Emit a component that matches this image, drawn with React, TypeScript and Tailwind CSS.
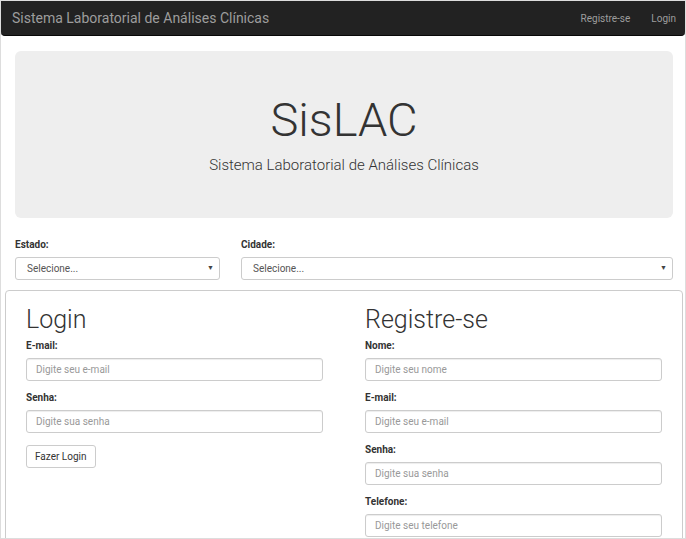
import React from "react";

const font = { fontFamily: "Roboto, 'Noto Sans', sans-serif" };

function Field({ label, placeholder, last }: { label: string; placeholder: string; last?: boolean }) {
  return (
    <div className={last ? "" : "mb-[10px]"}>
      <div className="text-[10px] font-bold text-[#333] leading-[14px] mb-[5px]">{label}</div>
      <div className="h-[23px] border border-[#ccc] rounded-[3px] bg-white px-[9px] flex items-center text-[10px] text-[#999] shadow-[inset_0_1px_1px_rgba(0,0,0,0.075)]">
        {placeholder}
      </div>
    </div>
  );
}

function Select({ label, className }: { label: string; className?: string }) {
  return (
    <div className={className}>
      <div className="text-[10px] font-bold text-[#333] leading-[14px] mb-[5px]">{label}</div>
      <div className="h-[23px] border border-[#ccc] rounded-[3px] bg-white pl-[11px] pr-[5px] flex items-center justify-between text-[10px] text-[#555]">
        <span>Selecione...</span>
        <span className="text-[7px] text-[#444]">▼</span>
      </div>
    </div>
  );
}

export default function App() {
  return (
    <div style={font} className="w-[686px] h-[539px] overflow-hidden border border-[#ddd] bg-white text-[#333]">
      <div className="h-[35px] bg-[#222] rounded-b-[4px] flex items-center justify-between pl-[11px] pr-[9px] border-b border-[#080808]">
        <span className="text-[14px] text-[#9d9d9d]">Sistema Laboratorial de Análises Clínicas</span>
        <div className="flex gap-[21px] text-[10px] text-[#9d9d9d]">
          <span>Registre-se</span>
          <span>Login</span>
        </div>
      </div>
      <div className="pl-[14px] pr-[12px] pt-[15px]">
        <div className="h-[167px] bg-[#eee] rounded-[6px] flex flex-col items-center justify-center">
          <div className="text-[47px] font-light leading-none text-[#333] mt-[4px]">SisLAC</div>
          <div className="text-[15px] font-light text-[#333] mt-[11px]">Sistema Laboratorial de Análises Clínicas</div>
        </div>
        <div className="flex gap-[21px] mt-[20px]">
          <Select label="Estado:" className="w-[205px]" />
          <Select label="Cidade:" className="flex-1" />
        </div>
      </div>
      <div className="ml-[4px] mr-[2px] mt-[10px] border border-[#ccc] rounded-[4px] px-[20px] pt-[13px] h-[300px]">
        <div className="grid grid-cols-2 gap-[42px]">
          <div>
            <div className="text-[25px] font-light leading-[32px] text-[#333] mb-[3px]">Login</div>
            <Field label="E-mail:" placeholder="Digite seu e-mail" />
            <Field label="Senha:" placeholder="Digite sua senha" />
            <div className="inline-flex h-[23px] items-center px-[8px] border border-[#ccc] rounded-[3px] text-[10px] text-[#333]">
              Fazer Login
            </div>
          </div>
          <div>
            <div className="text-[25px] font-light leading-[32px] text-[#333] mb-[3px]">Registre-se</div>
            <Field label="Nome:" placeholder="Digite seu nome" />
            <Field label="E-mail:" placeholder="Digite seu e-mail" />
            <Field label="Senha:" placeholder="Digite sua senha" />
            <Field label="Telefone:" placeholder="Digite seu telefone" last />
          </div>
        </div>
      </div>
    </div>
  );
}
